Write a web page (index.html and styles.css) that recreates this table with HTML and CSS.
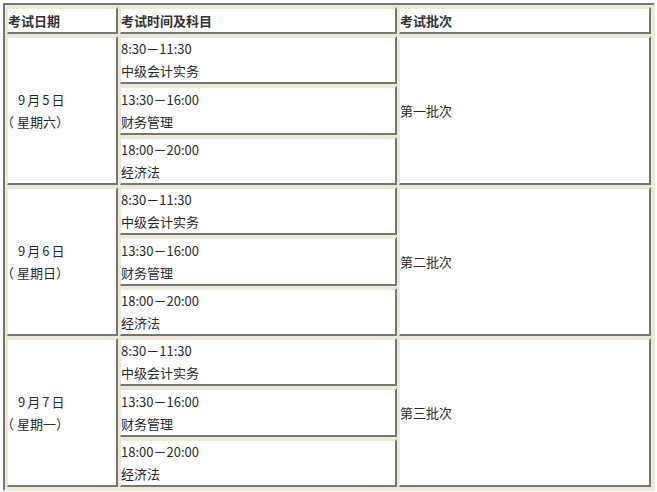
FILE: index.html
```html
<!DOCTYPE html>
<html lang="zh-CN">
<head>
<meta charset="utf-8">
<title>考试时间安排</title>
<link rel="stylesheet" href="styles.css">
</head>
<body>
<table class="exam">
  <colgroup>
    <col class="c1"><col class="c2"><col class="c3">
  </colgroup>
  <tr class="head">
    <th>考试日期</th>
    <th>考试时间及科目</th>
    <th>考试批次</th>
  </tr>
  <tr>
    <td rowspan="3" class="date"><span class="d">9月5日</span><br><span class="lp">（</span>星期六）</td>
    <td class="sub">8:30－11:30<br>中级会计实务</td>
    <td rowspan="3" class="batch">第一批次</td>
  </tr>
  <tr><td class="sub mid">13:30－16:00<br>财务管理</td></tr>
  <tr><td class="sub">18:00－20:00<br>经济法</td></tr>
  <tr>
    <td rowspan="3" class="date"><span class="d">9月6日</span><br><span class="lp">（</span>星期日）</td>
    <td class="sub">8:30－11:30<br>中级会计实务</td>
    <td rowspan="3" class="batch">第二批次</td>
  </tr>
  <tr><td class="sub mid">13:30－16:00<br>财务管理</td></tr>
  <tr><td class="sub">18:00－20:00<br>经济法</td></tr>
  <tr>
    <td rowspan="3" class="date"><span class="d">9月7日</span><br><span class="lp">（</span>星期一）</td>
    <td class="sub">8:30－11:30<br>中级会计实务</td>
    <td rowspan="3" class="batch">第三批次</td>
  </tr>
  <tr><td class="sub mid">13:30－16:00<br>财务管理</td></tr>
  <tr><td class="sub">18:00－20:00<br>经济法</td></tr>
</table>
</body>
</html>
```

FILE: styles.css
```css
html, body {
  margin: 0;
  padding: 0;
  background: #ffffff;
}
body {
  padding: 3px 0 0 3px;
  font-family: "Noto Sans CJK SC", "DejaVu Sans", sans-serif;
  font-size: 13px;
  color: #2a2a2a;
}
.exam {
  border-collapse: separate;
  border-spacing: 2px;
  border-style: solid;
  border-width: 2px;
  border-color: #777570 #ece9d8 #ece9d8 #777570;
  background: #ece9d8;
  width: 652px;
  table-layout: fixed;
}
.c1 { width: 111px; }
.c2 { width: 277px; }
.c3 { width: 252px; }
.exam th,
.exam td {
  border-style: solid;
  border-width: 2px 2px 2px 1px;
  border-color: #ece9d8 #777570 #777570 #ece9d8;
  background: #ffffff;
  padding: 0;
  text-align: left;
  line-height: 22px;
}
.exam th {
  height: 23px;
  line-height: 23px;
  font-weight: bold;
  color: #333333;
  vertical-align: middle;
}
.sub {
  height: 44px;
  vertical-align: middle;
}
.sub.mid {
  height: 45px;
}
.date {
  vertical-align: middle;
  line-height: 21px;
}
.d {
  padding-left: 10px;
  letter-spacing: 2px;
}
.lp {
  margin-left: -7px;
  margin-right: 3px;
}
.batch {
  vertical-align: middle;
}
```
